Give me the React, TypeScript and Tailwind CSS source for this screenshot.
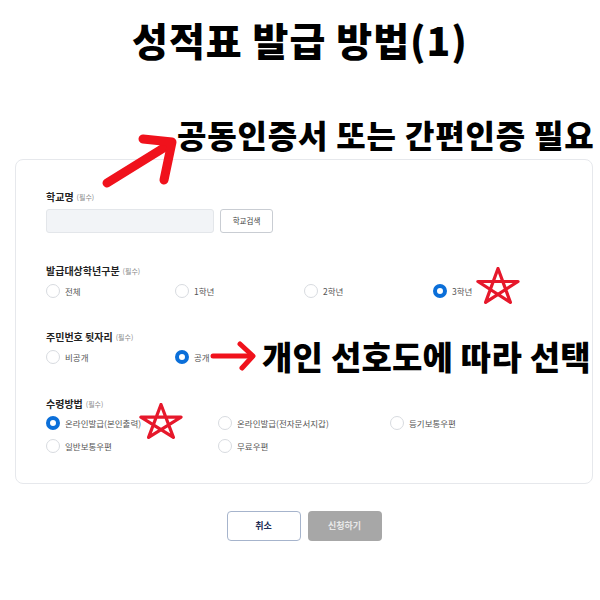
import React from "react";

const FONT = { fontFamily: '"Noto Sans CJK KR", "Noto Sans", sans-serif' };

function Radio({ label, checked }: { label: string; checked?: boolean }) {
  return (
    <div className="flex items-center h-[14px]">
      {checked ? (
        <span className="w-[14px] h-[14px] rounded-full border-[4px] border-[#0b6fd9] bg-white box-border shrink-0" />
      ) : (
        <span className="w-[14px] h-[14px] rounded-full border border-[#d8dbe0] bg-white box-border shrink-0" />
      )}
      <span className="ml-[5px] text-[8.5px] leading-none text-[#555] whitespace-nowrap">{label}</span>
    </div>
  );
}

function Label({ text }: { text: string }) {
  return (
    <div className="flex items-center h-[14px]">
      <span className="text-[10px] font-bold leading-none text-[#222]">{text}</span>
      <span className="ml-[3px] text-[7px] leading-none text-[#8a8a8a]">(필수)</span>
    </div>
  );
}

function Star({ className }: { className: string }) {
  const pts: [number, number][] = [];
  for (let i = 0; i < 5; i++) {
    const a = -Math.PI / 2 + (i * 2 * Math.PI) / 5;
    pts.push([50 + 48 * Math.cos(a), 52 + 48 * Math.sin(a)]);
  }
  const order = [0, 2, 4, 1, 3];
  const d =
    order.map((k, i) => `${i === 0 ? "M" : "L"}${pts[k][0].toFixed(2)} ${pts[k][1].toFixed(2)}`).join(" ") + " Z";
  return (
    <svg className={className} viewBox="0 0 100 95" preserveAspectRatio="none">
      <path d={d} fill="none" stroke="#e6182b" strokeLinejoin="round" strokeLinecap="round" vectorEffect="non-scaling-stroke" style={{ strokeWidth: 3.2 }} />
    </svg>
  );
}

export default function App() {
  return (
    <div className="relative w-[600px] h-[600px] bg-white overflow-hidden" style={FONT}>
      {/* Header */}
      <div className="h-[159px] flex flex-col">
        <div className="mt-[20px] h-[39px] text-center text-[39px] leading-[39px] font-black text-black tracking-[1px] whitespace-nowrap">
          성적표 발급 방법(1)
        </div>
        <div className="mt-[59px] pl-[177px] h-[32px] text-[32px] leading-[32px] font-black text-black whitespace-nowrap tracking-[0.8px]">
          공동인증서 또는 간편인증 필요
        </div>
      </div>

      {/* Card */}
      <div className="ml-[15px] w-[578px] border border-[#e6e8ec] rounded-[8px] bg-white pl-[30px] pt-[30px] pb-[30px] box-border">
        <Label text="학교명" />
        <div className="mt-[5px] flex items-center">
          <div className="w-[168px] h-[24px] bg-[#f2f4f7] border border-[#e3e6ea] rounded-[3px] box-border" />
          <div className="ml-[6px] w-[53px] h-[24px] border border-[#c9cdd3] rounded-[3px] box-border flex items-center justify-center text-[7.5px] text-[#444]">
            학교검색
          </div>
        </div>

        <div className="mt-[31px]">
          <Label text="발급대상학년구분" />
        </div>
        <div className="mt-[6px] grid grid-cols-[129px_129px_129px_129px]">
          <Radio label="전체" />
          <Radio label="1학년" />
          <Radio label="2학년" />
          <Radio label="3학년" checked />
        </div>

        <div className="mt-[32px]">
          <Label text="주민번호 뒷자리" />
        </div>
        <div className="mt-[6px] grid grid-cols-[129px_129px]">
          <Radio label="비공개" />
          <Radio label="공개" checked />
        </div>

        <div className="mt-[33px]">
          <Label text="수령방법" />
        </div>
        <div className="mt-[5px] grid grid-cols-[172px_172px_172px] gap-y-[9px]">
          <Radio label="온라인발급(본인출력)" checked />
          <Radio label="온라인발급(전자문서지갑)" />
          <Radio label="등기보통우편" />
          <Radio label="일반보통우편" />
          <Radio label="무료우편" />
        </div>
      </div>

      {/* Buttons */}
      <div className="ml-[15px] w-[578px] mt-[27px] flex justify-center gap-[7px]">
        <div className="w-[74px] h-[30px] border border-[#a6b4cc] rounded-[4px] bg-white box-border flex items-center justify-center text-[9px] font-bold text-[#1d2b55]">
          취소
        </div>
        <div className="w-[74px] h-[30px] rounded-[4px] bg-[#a7a7a7] flex items-center justify-center text-[9px] font-bold text-[#e9e9e9]">
          신청하기
        </div>
      </div>

      {/* Annotations */}
      <svg className="absolute left-0 top-0 w-[600px] h-[600px] pointer-events-none" viewBox="0 0 600 600">
        <g stroke="#f0121c" strokeLinecap="round" strokeLinejoin="round" fill="none">
          <path d="M107 183 L170 144" strokeWidth={9} />
          <path d="M143 139 L172 142 L164 180" strokeWidth={9} />
          <path d="M213 356 L252 356" strokeWidth={5} />
          <path d="M240 344 L253 356 L242 368" strokeWidth={5} />
        </g>
      </svg>
      <div className="absolute left-[262px] top-[340px] h-[33px] text-[33px] leading-[33px] font-black text-black whitespace-nowrap tracking-[0.2px]">
        개인 선호도에 따라 선택
      </div>
      <Star className="absolute left-[476px] top-[267px] w-[44px] h-[37px]" />
      <Star className="absolute left-[139px] top-[403px] w-[44px] h-[36px]" />
    </div>
  );
}
